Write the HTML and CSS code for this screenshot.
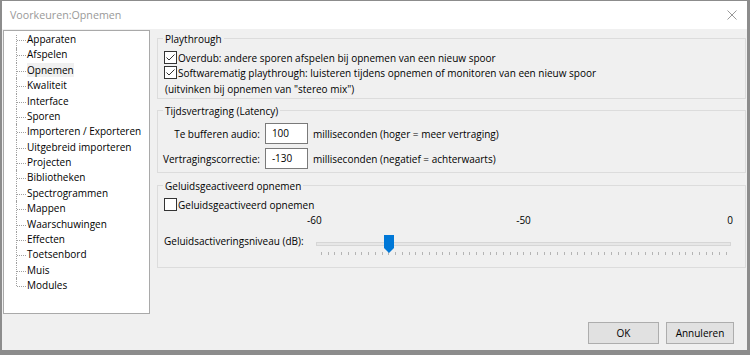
FILE: index.html
```html
<!DOCTYPE html>
<html>
<head>
	<meta charset="utf-8" />
	<title>Voorkeuren:Opnemen</title>
	<link rel="stylesheet" href="styles.css">
</head>
<body>
<div class="window">
	<div class="titlebar">
		<span class="title">Voorkeuren:Opnemen</span>
		<svg class="close" width="10" height="10" viewBox="0 0 10 10"><path d="M0.5 0.5 L9.5 9.5 M9.5 0.5 L0.5 9.5" /></svg>
	</div>
	<div class="client">
		<div class="panes">
			<ul class="tree">
				<li>Apparaten</li>
				<li>Afspelen</li>
				<li><span class="selected">Opnemen</span></li>
				<li>Kwaliteit</li>
				<li>Interface</li>
				<li>Sporen</li>
				<li>Importeren / Exporteren</li>
				<li>Uitgebreid importeren</li>
				<li>Projecten</li>
				<li>Bibliotheken</li>
				<li>Spectrogrammen</li>
				<li>Mappen</li>
				<li>Waarschuwingen</li>
				<li>Effecten</li>
				<li>Toetsenbord</li>
				<li>Muis</li>
				<li>Modules</li>
			</ul>
			<div class="pages">
				<!-- playthrough -->
				<fieldset class="group group-play">
					<legend>Playthrough</legend>
					<label class="check"><span class="box checked"></span>Overdub: andere sporen afspelen bij opnemen van een nieuw spoor</label>
					<label class="check"><span class="box checked"></span>Softwarematig playthrough: luisteren tijdens opnemen of monitoren van een nieuw spoor</label>
					<p class="note">(uitvinken bij opnemen van "stereo mix")</p>
				</fieldset>
				<!-- latency -->
				<fieldset class="group group-latency">
					<legend>Tijdsvertraging (Latency)</legend>
					<div class="latency">
						<span class="lbl">Te bufferen audio:</span>
						<span class="field">100</span>
						<span>milliseconden (hoger = meer vertraging)</span>
						<span class="lbl">Vertragingscorrectie:</span>
						<span class="field">-130</span>
						<span>milliseconden (negatief = achterwaarts)</span>
					</div>
				</fieldset>
				<!-- sound activated -->
				<fieldset class="group group-sound">
					<legend>Geluidsgeactiveerd opnemen</legend>
					<label class="check"><span class="box"></span>Geluidsgeactiveerd opnemen</label>
					<div class="level">
						<span></span>
						<div class="scale"><span class="min">-60</span><span>-50</span><span class="max">0</span></div>
						<span class="level-lbl">Geluidsactiveringsniveau (dB):</span>
						<div class="slider">
							<div class="track"></div>
							<svg class="thumb" width="10" height="18" viewBox="0 0 10 18"><path d="M0 0 H10 V13 L5 18 L0 13 Z" /></svg>
							<div class="ticks"></div>
						</div>
					</div>
				</fieldset>
			</div>
		</div>
		<div class="buttons">
			<button class="btn btn-ok">OK</button>
			<button class="btn btn-cancel">Annuleren</button>
		</div>
	</div>
</div>
</body>
</html>
```
FILE: styles.css
```css
body{
	margin: 0;
	padding: 0;
	font-family: "Open Sans", "Noto Sans", sans-serif;
	font-size: 10px;
	color: #000;
}
.window{
	width: 750px;
	height: 355px;
	box-sizing: border-box;
	display: flex;
	flex-direction: column;
	background-color: #f0f0f0;
	border-style: solid;
	border-color: #8c8c8c;
	border-width: 1px 3px 5px 2px;
}
/* barre de titre */
.titlebar{
	height: 28px;
	flex: none;
	display: flex;
	align-items: center;
	justify-content: space-between;
	padding: 0 10px 0 8px;
	background-color: #fff;
}
.title{
	color: #999;
	font-size: 10.7px;
}
.close path{
	stroke: #999;
	stroke-width: 1;
	fill: none;
}
.client{
	flex: 1;
	display: flex;
	flex-direction: column;
}
.panes{
	display: flex;
	align-items: flex-start;
}
/* arbre des pages */
.tree{
	width: 147px;
	height: 284px;
	box-sizing: border-box;
	margin: 1px 0 0 1px;
	padding: 1px 0 0 0;
	list-style: none;
	background-color: #fff;
	border: 1px solid #a9a9a9;
}
.tree li{
	position: relative;
	height: 15.375px;
	line-height: 15.375px;
	padding-left: 23px;
	white-space: nowrap;
}
.tree li::before{
	content: "";
	position: absolute;
	left: 12px;
	top: 0;
	height: 100%;
	border-left: 1px dotted #a0a0a0;
}
.tree li:first-child::before{
	top: 3px;
}
.tree li:last-child::before{
	height: 50%;
}
.tree li::after{
	content: "";
	position: absolute;
	left: 13px;
	top: 8px;
	width: 9px;
	border-top: 1px dotted #a0a0a0;
}
.tree .selected{
	background-color: #f0f0f0;
}
/* pages */
.pages{
	flex: 1;
	margin: 0 1px 0 7px;
}
.group{
	margin: 0;
	padding: 0 6px;
	min-width: 0;
	border: 1px solid #dcdcdc;
}
.group legend{
	margin-left: -1px;
	padding: 2px 2px 0 2px;
	line-height: 16px;
}
.group-play{
	padding-bottom: 1px;
}
.group-latency{
	margin-top: 2px;
	padding-bottom: 3px;
}
.group-sound{
	margin-top: 3px;
	padding-bottom: 11px;
}
.check{
	display: flex;
	align-items: center;
	gap: 1px;
	height: 15px;
	white-space: nowrap;
}
.group-play .check:first-of-type{
	margin-top: 3px;
}
.box{
	width: 13px;
	height: 13px;
	box-sizing: border-box;
	border: 1px solid #333;
	background-color: #fff;
	flex: none;
}
.box.checked{
	background: #fff url("data:image/svg+xml,%3Csvg xmlns='http://www.w3.org/2000/svg' width='11' height='11'%3E%3Cpath d='M1.5 5.5 L4 8 L9.5 2.5' fill='none' stroke='%23333' stroke-width='1'/%3E%3C/svg%3E") no-repeat center;
}
.note{
	margin: 2px 0 0 1px;
	line-height: 15px;
}
/* latence */
.latency{
	display: grid;
	grid-template-columns: auto 43px auto;
	justify-content: start;
	align-items: center;
	column-gap: 5px;
	row-gap: 4px;
	margin: 4px 0 0 -1px;
}
.latency .lbl{
	justify-self: end;
}
.field{
	height: 21px;
	box-sizing: border-box;
	line-height: 19px;
	padding-left: 6px;
	background-color: #fff;
	border: 1px solid #7a7a7a;
}
/* niveau d'activation */
.group-sound .check{
	margin-top: 3px;
}
.level{
	display: grid;
	grid-template-columns: 152px 415px;
	margin-top: 1px;
}
.scale{
	display: grid;
	grid-template-columns: 1fr auto 1fr;
	line-height: 15px;
}
.scale .min{
	justify-self: start;
	margin-left: -9px;
}
.scale .max{
	justify-self: end;
	margin-right: -2px;
}
.level-lbl{
	margin-top: 6px;
	line-height: 15px;
	white-space: nowrap;
}
.slider{
	position: relative;
	height: 28px;
}
.track{
	margin-top: 14px;
	height: 4px;
	box-sizing: border-box;
	background-color: #e7e7e7;
	border: 1px solid #d6d6d6;
}
.thumb{
	position: absolute;
	left: 68px;
	top: 7px;
}
.thumb path{
	fill: #0078d7;
}
.ticks{
	margin: 6px 0 0 5px;
	width: 406px;
	height: 3px;
	background: repeating-linear-gradient(90deg, #b4b4b4 0 1px, transparent 1px 6.75px);
}
/* boutons */
.buttons{
	margin-top: auto;
	display: flex;
	justify-content: flex-end;
	gap: 7px;
	padding: 0 13px 6px 0;
}
.btn{
	height: 22px;
	padding: 0;
	font-family: inherit;
	font-size: 10px;
	color: #000;
	background-color: #e1e1e1;
	border: 1px solid #adadad;
}
.btn-ok{
	width: 71px;
}
.btn-cancel{
	width: 68px;
}
```
